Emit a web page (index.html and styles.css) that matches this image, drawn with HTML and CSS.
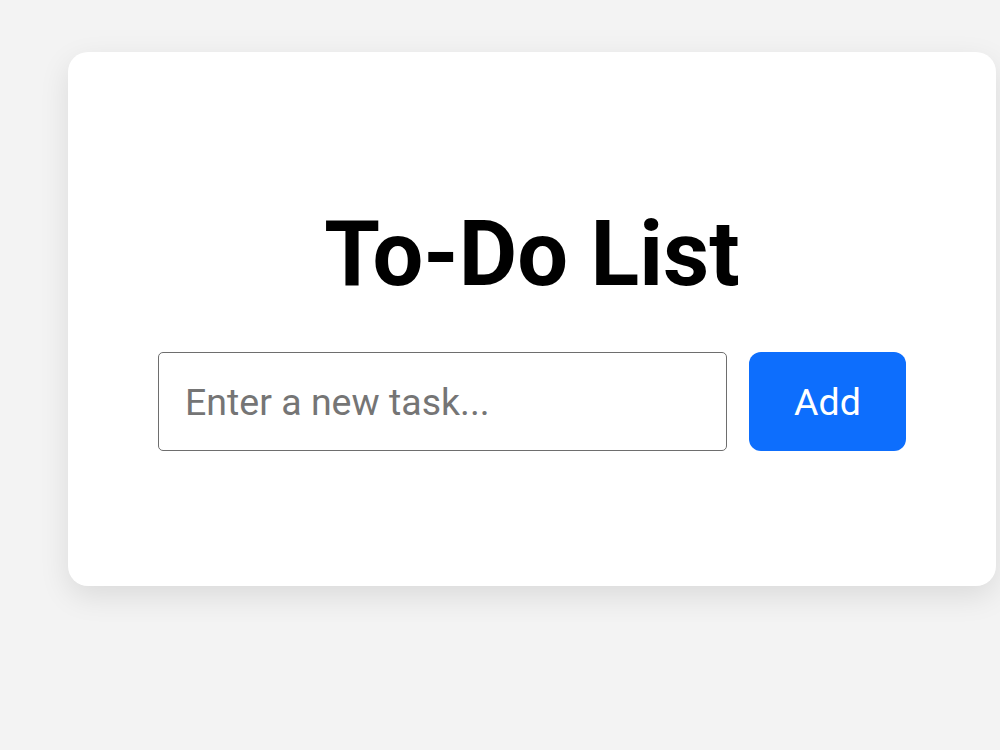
FILE: index.html
```html
<!DOCTYPE html>
<html lang="en">
<head>
<meta charset="utf-8">
<title>To-Do List</title>
<link rel="stylesheet" href="styles.css">
</head>
<body>
<main class="page">
  <section class="card">
    <h1 class="title">To-Do List</h1>
    <form class="task-form" onsubmit="return false">
      <input class="task-input" type="text" placeholder="Enter a new task...">
      <button class="add-btn" type="submit">Add</button>
    </form>
  </section>
</main>
</body>
</html>
```
FILE: styles.css
```css
* {
  box-sizing: border-box;
}

html,
body {
  margin: 0;
  height: 100%;
  background: #f3f3f3;
  font-family: Roboto, "Liberation Sans", Arial, sans-serif;
}

.page {
  padding: 52px 0 0 68px;
}

.card {
  width: 928px;
  height: 534px;
  background: #ffffff;
  border-radius: 20px;
  box-shadow: 0 10px 30px rgba(0, 0, 0, 0.1);
  display: flex;
  flex-direction: column;
  align-items: center;
  padding-top: 150px;
}

.title {
  margin: 0 0 45px;
  font-size: 90px;
  font-weight: 700;
  line-height: normal;
  color: #000;
}

.task-form {
  display: flex;
  gap: 22px;
}

.task-input {
  width: 569px;
  height: 99px;
  padding: 0 26px;
  border: 1px solid #6e6e6e;
  border-radius: 5px;
  font-family: inherit;
  font-size: 37.5px;
  color: #222;
  background: #fff;
  outline: none;
}

.task-input::placeholder {
  color: #757575;
}

.add-btn {
  width: 157px;
  height: 99px;
  border: none;
  border-radius: 12px;
  background: #0d6efd;
  color: #fff;
  font-family: inherit;
  font-size: 37.5px;
  cursor: pointer;
}
```
